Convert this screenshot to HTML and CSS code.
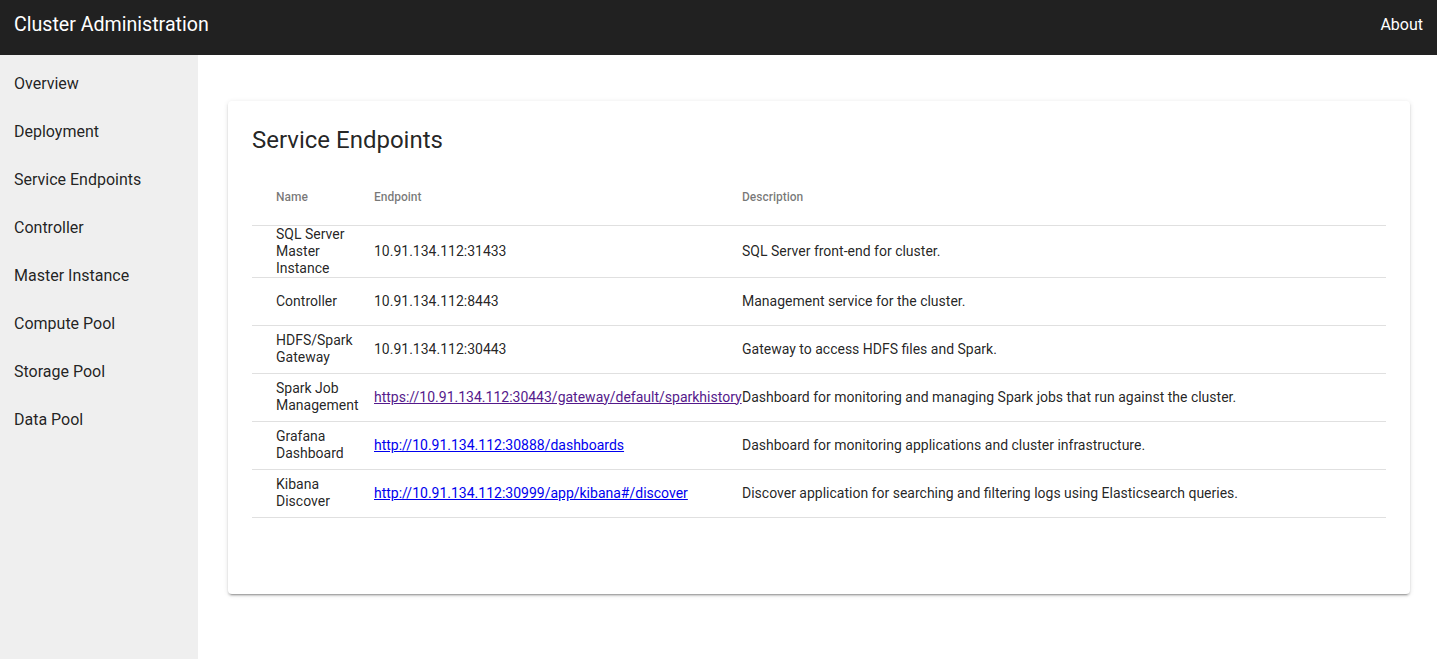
FILE: index.html
```html
<!DOCTYPE html>
<html lang="en">
<head>
<meta charset="utf-8">
<title>Cluster Administration</title>
<link rel="stylesheet" href="styles.css">
</head>
<body>
<header class="toolbar">
  <span class="app-title">Cluster Administration</span>
  <a class="about" href="#">About</a>
</header>
<div class="layout">
  <nav class="sidenav">
    <a class="nav-item" href="#">Overview</a>
    <a class="nav-item" href="#">Deployment</a>
    <a class="nav-item" href="#">Service Endpoints</a>
    <a class="nav-item" href="#">Controller</a>
    <a class="nav-item" href="#">Master Instance</a>
    <a class="nav-item" href="#">Compute Pool</a>
    <a class="nav-item" href="#">Storage Pool</a>
    <a class="nav-item" href="#">Data Pool</a>
  </nav>
  <main class="content">
    <section class="card">
      <h1 class="card-title">Service Endpoints</h1>
      <table class="endpoints">
        <colgroup>
          <col class="col-name">
          <col class="col-endpoint">
          <col class="col-desc">
        </colgroup>
        <thead>
          <tr>
            <th class="c-name">Name</th>
            <th>Endpoint</th>
            <th>Description</th>
          </tr>
        </thead>
        <tbody>
          <tr>
            <td class="c-name">SQL Server Master Instance</td>
            <td>10.91.134.112:31433</td>
            <td>SQL Server front-end for cluster.</td>
          </tr>
          <tr>
            <td class="c-name">Controller</td>
            <td>10.91.134.112:8443</td>
            <td>Management service for the cluster.</td>
          </tr>
          <tr>
            <td class="c-name">HDFS/Spark Gateway</td>
            <td>10.91.134.112:30443</td>
            <td>Gateway to access HDFS files and Spark.</td>
          </tr>
          <tr>
            <td class="c-name">Spark Job Management</td>
            <td><a class="link visited" href="#">https://10.91.134.112:30443/gateway/default/sparkhistory</a></td>
            <td>Dashboard for monitoring and managing Spark jobs that run against the cluster.</td>
          </tr>
          <tr>
            <td class="c-name">Grafana Dashboard</td>
            <td><a class="link" href="#">http://10.91.134.112:30888/dashboards</a></td>
            <td>Dashboard for monitoring applications and cluster infrastructure.</td>
          </tr>
          <tr>
            <td class="c-name">Kibana Discover</td>
            <td><a class="link" href="#">http://10.91.134.112:30999/app/kibana#/discover</a></td>
            <td>Discover application for searching and filtering logs using Elasticsearch queries.</td>
          </tr>
        </tbody>
      </table>
    </section>
  </main>
</div>
</body>
</html>
```

FILE: styles.css
```css
* { box-sizing: border-box; }

html, body {
  margin: 0;
  height: 100%;
}

body {
  font-family: Roboto, "Liberation Sans", Arial, sans-serif;
  color: rgba(0, 0, 0, 0.87);
  background: #fff;
  display: flex;
  flex-direction: column;
}

.toolbar {
  height: 55px;
  flex: 0 0 55px;
  background: #212121;
  color: #fff;
  display: flex;
  align-items: center;
  justify-content: space-between;
  padding: 0 14px 6px 14px;
}

.app-title {
  font-size: 19.6px;
  font-weight: 400;
}

.about {
  color: #fff;
  text-decoration: none;
  font-size: 16px;
}

.layout {
  flex: 1;
  display: flex;
  min-height: 0;
}

.sidenav {
  width: 198px;
  flex: 0 0 198px;
  background: #efefef;
  padding-top: 4px;
  display: flex;
  flex-direction: column;
}

.nav-item {
  height: 48px;
  display: flex;
  align-items: center;
  padding: 0 14px;
  font-size: 16px;
  color: rgba(0, 0, 0, 0.87);
  text-decoration: none;
}

.content {
  flex: 1;
  padding: 46px 27px 0 30px;
}

.card {
  background: #fff;
  border-radius: 4px;
  padding: 23px 24px 76px 24px;
  box-shadow: 0 3px 1px -2px rgba(0,0,0,.2), 0 2px 2px 0 rgba(0,0,0,.14), 0 1px 5px 0 rgba(0,0,0,.12);
}

.card-title {
  margin: 0 0 13px 0;
  font-size: 24px;
  line-height: 32px;
  font-weight: 400;
}

.endpoints {
  width: 100%;
  border-collapse: collapse;
  table-layout: fixed;
  font-size: 14px;
}

.col-name { width: 122px; }
.col-endpoint { width: 368px; }

.endpoints th {
  height: 56px;
  text-align: left;
  font-size: 12px;
  font-weight: 500;
  color: rgba(0, 0, 0, 0.54);
  padding: 0;
  border-bottom: 1px solid rgba(0, 0, 0, 0.12);
  vertical-align: middle;
}

.endpoints td {
  height: 48px;
  padding: 0;
  line-height: 17px;
  border-bottom: 1px solid rgba(0, 0, 0, 0.12);
  vertical-align: middle;
  white-space: nowrap;
}

.endpoints td.c-name {
  white-space: normal;
}

.endpoints .c-name {
  padding-left: 24px;
  padding-right: 8px;
}

.link { color: #0000ee; }
.link.visited { color: #551a8b; }
```
